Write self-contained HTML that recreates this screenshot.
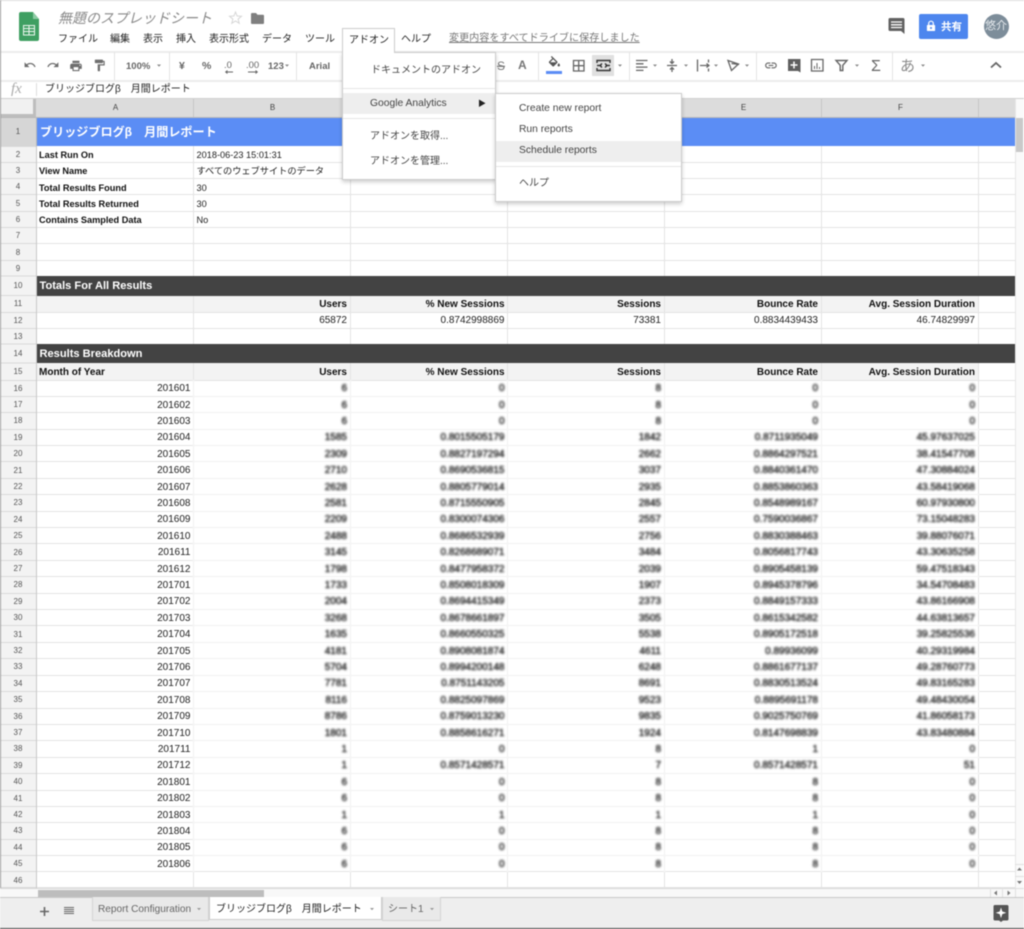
<!DOCTYPE html>
<html lang="ja"><head><meta charset="utf-8"><title>無題のスプレッドシート</title>
<style>
html,body{margin:0;padding:0;background:#fff}
#w{position:relative;width:1024px;height:929px;overflow:hidden;background:#fff;font-family:"Liberation Sans","Noto Sans CJK JP",sans-serif;font-size:10px;color:#222;filter:blur(.4px)}
.abs,.t{position:absolute}
.t{white-space:nowrap;line-height:14px}
svg{position:absolute;left:0;top:0}
.r{position:absolute;left:0;width:1015px;height:16.3px;line-height:16.3px;font-size:10px;color:#222}
.r span{position:absolute;top:1.3px;white-space:nowrap}
.r span:nth-child(1){left:0;width:36px;text-align:center;font-size:8px;color:#555;top:.5px}
.r span:nth-child(2){left:37px;width:153.5px;text-align:right}
.r span:nth-child(3){left:194px;width:153px;text-align:right}
.r span:nth-child(4){left:351px;width:153.5px;text-align:right}
.r span:nth-child(5){left:508px;width:153px;text-align:right}
.r span:nth-child(6){left:665px;width:153px;text-align:right}
.r span:nth-child(7){left:822px;width:153px;text-align:right}
.r span.L{left:39px;width:150px;text-align:left;font-weight:bold;color:#111}
.r span.M{left:196.5px;width:150px;text-align:left}
.s span.L,.s span.M{font-size:9.2px}
.s span.L{top:.8px}.s span.M{top:.8px}
.b span{font-weight:bold;color:#111}
.b span:nth-child(1){font-weight:normal;color:#555}
.v span:nth-child(n+3){filter:blur(1px);color:#111;-webkit-text-stroke:.35px #222}
.d{position:absolute;left:37px;width:978px;background:#434343;color:#fff;font-weight:bold;font-size:11.1px;padding-left:2.5px;box-sizing:border-box}
.ch{position:absolute;top:99px;height:18px;line-height:18px;font-size:8px;color:#444;text-align:center;width:157px}
.n1{position:absolute;left:0;width:36px;text-align:center;font-size:8px;color:#555}
#m1,#m2{position:absolute;background:#fff;border:1px solid #ccc;box-shadow:0 2px 4px rgba(0,0,0,.2);box-sizing:border-box;color:#444}
.hl{position:absolute;background:#eee}
.sep{position:absolute;height:1px;background:#e5e5e5}
.tab{position:absolute;top:897px;height:24px;line-height:25px;box-sizing:border-box;font-size:10.1px;color:#666;background:#e9e9e9;border:1px solid #d4d4d4;border-top:0;white-space:nowrap}
</style></head><body><div id="w">

<!-- top chrome -->
<div class="abs" style="left:0;top:0;width:1024px;height:1px;background:#ddd"></div>
<div class="abs" style="left:0;top:51px;width:1024px;height:1.5px;background:#ececec"></div>
<div class="abs" style="left:0;top:80px;width:1024px;height:1.5px;background:#ececec"></div>
<div class="abs" style="left:0;top:98px;width:1024px;height:1px;background:#d0d0d0"></div>

<div class="t" style="left:58px;top:10px;font-size:14px;line-height:17px;font-style:italic;color:#8a8a8a">無題のスプレッドシート</div>
<div class="t" style="left:58px;top:33px;color:#222">ファイル</div>
<div class="t" style="left:110px;top:33px">編集</div>
<div class="t" style="left:143px;top:33px">表示</div>
<div class="t" style="left:176px;top:33px">挿入</div>
<div class="t" style="left:209px;top:33px">表示形式</div>
<div class="t" style="left:262px;top:33px">データ</div>
<div class="t" style="left:305px;top:33px">ツール</div>
<div class="t" style="left:401px;top:33px">ヘルプ</div>
<div class="t" style="left:449px;top:31.5px;color:#777;text-decoration:underline;font-size:10.1px">変更内容をすべてドライブに保存しました</div>

<!-- share -->
<div class="abs" style="left:919px;top:14px;width:49px;height:25px;background:#4d86ee;border-radius:2px"></div>
<div class="t" style="left:941px;top:20px;color:#fff;font-weight:bold;font-size:10.5px">共有</div>
<div class="abs" style="left:983.5px;top:13.5px;width:25px;height:25px;border-radius:50%;background:#7d8d9a"></div>
<div class="t" style="left:985px;top:19px;color:#e8ecef;font-size:11px">悠介</div>

<!-- formula bar -->
<div class="t" style="left:11px;top:81px;font-family:'Liberation Serif',serif;font-style:italic;font-size:15px;line-height:17px;color:#aaa">fx</div>
<div class="abs" style="left:36px;top:83px;width:1px;height:13px;background:#ddd"></div>
<div class="t" style="left:45px;top:82.5px;color:#222">ブリッジブログβ　月間レポート</div>

<!-- grid backgrounds -->
<div class="abs" style="left:0;top:99px;width:1015px;height:18px;background:#dcdcdc;border-bottom:1px solid #b8b8b8;box-sizing:content-box"></div>
<div class="abs" style="left:0;top:99px;width:33px;height:15px;background:#f1f1f1;border-right:3px solid #bdbdbd;border-bottom:3px solid #bdbdbd"></div>
<div class="abs" style="left:0;top:118px;width:36px;height:770px;background:#f3f3f3;border-right:1px solid #c8c8c8"></div>
<div class="abs" style="left:0;top:118px;width:36px;height:28px;background:#d6d6d6;border-right:1px solid #b8b8b8"></div>
<div class="abs" style="left:37px;top:295.5px;width:941px;height:16.5px;background:#f3f3f3"></div>
<div class="abs" style="left:37px;top:363px;width:941px;height:17px;background:#f3f3f3"></div>

<svg width="1024" height="929" viewBox="0 0 1024 929" fill="none">
<!-- normal grid -->
<path stroke="#e4e4e4" d="M193.5 146V380M350.5 146V380M507.5 146V380M664.5 146V380M821.5 146V380M978.5 146V888M193.5 872V888M350.5 872V888M507.5 872V888M664.5 872V888M821.5 872V888"/>
<path stroke="#e4e4e4" d="M37 162.5H1015M37 178.5H1015M37 194.5H1015M37 211.5H1015M37 227.5H1015M37 243.5H1015M37 260.5H1015M37 312.5H1015M37 328.5H1015M37 380.5H1015M37 871.5H1015M37 887.5H1015
M37 396.5H194M37 412.5H194M37 429.5H194M37 445.5H194M37 461.5H194M37 478.5H194M37 494.5H194M37 511.5H194M37 527.5H194M37 543.5H194M37 560.5H194M37 576.5H194M37 593.5H194M37 609.5H194M37 625.5H194M37 642.5H194M37 658.5H194M37 675.5H194M37 691.5H194M37 708.5H194M37 724.5H194M37 740.5H194M37 757.5H194M37 773.5H194M37 790.5H194M37 806.5H194M37 822.5H194M37 839.5H194M37 855.5H194
M979 396.5H1015M979 412.5H1015M979 429.5H1015M979 445.5H1015M979 461.5H1015M979 478.5H1015M979 494.5H1015M979 511.5H1015M979 527.5H1015M979 543.5H1015M979 560.5H1015M979 576.5H1015M979 593.5H1015M979 609.5H1015M979 625.5H1015M979 642.5H1015M979 658.5H1015M979 675.5H1015M979 691.5H1015M979 708.5H1015M979 724.5H1015M979 740.5H1015M979 757.5H1015M979 773.5H1015M979 790.5H1015M979 806.5H1015M979 822.5H1015M979 839.5H1015M979 855.5H1015"/>
<!-- faint grid in blurred zone -->
<path stroke="#f5f5f5" stroke-width="1.5" d="M193.5 380V872M350.5 380V872M507.5 380V872M664.5 380V872M821.5 380V872
M194 396.5H979M194 412.5H979M194 429.5H979M194 445.5H979M194 461.5H979M194 478.5H979M194 494.5H979M194 511.5H979M194 527.5H979M194 543.5H979M194 560.5H979M194 576.5H979M194 593.5H979M194 609.5H979M194 625.5H979M194 642.5H979M194 658.5H979M194 675.5H979M194 691.5H979M194 708.5H979M194 724.5H979M194 740.5H979M194 757.5H979M194 773.5H979M194 790.5H979M194 806.5H979M194 822.5H979M194 839.5H979M194 855.5H979"/>
<!-- row header grid -->
<path stroke="#d9d9d9" d="M0 162.5H36M0 178.5H36M0 194.5H36M0 211.5H36M0 227.5H36M0 243.5H36M0 260.5H36M0 312.5H36M0 328.5H36M0 380.5H36M0 396.5H36M0 412.5H36M0 429.5H36M0 445.5H36M0 461.5H36M0 478.5H36M0 494.5H36M0 511.5H36M0 527.5H36M0 543.5H36M0 560.5H36M0 576.5H36M0 593.5H36M0 609.5H36M0 625.5H36M0 642.5H36M0 658.5H36M0 675.5H36M0 691.5H36M0 708.5H36M0 724.5H36M0 740.5H36M0 757.5H36M0 773.5H36M0 790.5H36M0 806.5H36M0 822.5H36M0 839.5H36M0 855.5H36M0 871.5H36M0 887.5H36M0 146.5H36M0 276H36M0 295.5H36M0 344H36M0 363H36"/>
<!-- column header separators -->
<path stroke="#c6c6c6" d="M193.5 99V117M350.5 99V117M507.5 99V117M664.5 99V117M821.5 99V117M978.5 99V117"/>
<!-- left window edge -->
<path stroke="#9a9a9a" d="M.5 0V929"/>
</svg>

<div class="ch" style="left:37px">A</div><div class="ch" style="left:194px">B</div><div class="ch" style="left:351px">C</div><div class="ch" style="left:508px">D</div><div class="ch" style="left:665px">E</div><div class="ch" style="left:822px">F</div>

<!-- row 1 -->
<div class="abs" style="left:37px;top:118px;width:978px;height:28px;background:#5b8df5;color:#fff;font-weight:bold;font-size:12.1px;line-height:28px;padding-left:3px;box-sizing:border-box;white-space:nowrap">ブリッジブログβ　月間レポート</div>
<div class="n1" style="top:118px;line-height:28px">1</div>

<div class="r s" style="top:146.5px"><span>2</span><span class="L">Last Run On</span><span class="M">2018-06-23 15:01:31</span></div>
<div class="r s" style="top:162.7px"><span>3</span><span class="L">View Name</span><span class="M">すべてのウェブサイトのデータ</span></div>
<div class="r s" style="top:178.9px"><span>4</span><span class="L">Total Results Found</span><span class="M">30</span></div>
<div class="r s" style="top:195.2px"><span>5</span><span class="L">Total Results Returned</span><span class="M">30</span></div>
<div class="r s" style="top:211.5px"><span>6</span><span class="L">Contains Sampled Data</span><span class="M">No</span></div>
<div class="r" style="top:227.8px"><span>7</span></div>
<div class="r" style="top:244px"><span>8</span></div>
<div class="r" style="top:260.3px"><span>9</span></div>

<div class="d" style="top:276px;height:19.5px;line-height:21px">Totals For All Results</div>
<div class="n1" style="top:276px;line-height:20px">10</div>
<div class="r b" style="top:295.8px"><span>11</span><span></span><span>Users</span><span>% New Sessions</span><span>Sessions</span><span>Bounce Rate</span><span>Avg. Session Duration</span></div>
<div class="r" style="top:312.2px"><span>12</span><span></span><span>65872</span><span>0.8742998869</span><span>73381</span><span>0.8834439433</span><span>46.74829997</span></div>
<div class="r" style="top:328.6px"><span>13</span></div>
<div class="d" style="top:344.3px;height:19px;line-height:21px">Results Breakdown</div>
<div class="n1" style="top:344.3px;line-height:20px">14</div>
<div class="r b" style="top:363.5px"><span>15</span><span class="L">Month of Year</span><span>Users</span><span>% New Sessions</span><span>Sessions</span><span>Bounce Rate</span><span>Avg. Session Duration</span></div>

<div class="r v" style="top:380px"><span>16</span><span>201601</span><span>6</span><span>0</span><span>8</span><span>0</span><span>0</span></div>
<div class="r v" style="top:396.4px"><span>17</span><span>201602</span><span>6</span><span>0</span><span>8</span><span>0</span><span>0</span></div>
<div class="r v" style="top:412.8px"><span>18</span><span>201603</span><span>6</span><span>0</span><span>8</span><span>0</span><span>0</span></div>
<div class="r v" style="top:429.2px"><span>19</span><span>201604</span><span>1585</span><span>0.8015505179</span><span>1842</span><span>0.8711935049</span><span>45.97637025</span></div>
<div class="r v" style="top:445.6px"><span>20</span><span>201605</span><span>2309</span><span>0.8827197294</span><span>2662</span><span>0.8864297521</span><span>38.41547708</span></div>
<div class="r v" style="top:462px"><span>21</span><span>201606</span><span>2710</span><span>0.8690536815</span><span>3037</span><span>0.8840361470</span><span>47.30884024</span></div>
<div class="r v" style="top:478.4px"><span>22</span><span>201607</span><span>2628</span><span>0.8805779014</span><span>2935</span><span>0.8853860363</span><span>43.58419068</span></div>
<div class="r v" style="top:494.8px"><span>23</span><span>201608</span><span>2581</span><span>0.8715550905</span><span>2845</span><span>0.8548989167</span><span>60.97930800</span></div>
<div class="r v" style="top:511.2px"><span>24</span><span>201609</span><span>2209</span><span>0.8300074306</span><span>2557</span><span>0.7590036867</span><span>73.15048283</span></div>
<div class="r v" style="top:527.6px"><span>25</span><span>201610</span><span>2488</span><span>0.8686532939</span><span>2756</span><span>0.8830388463</span><span>39.88076071</span></div>
<div class="r v" style="top:544px"><span>26</span><span>201611</span><span>3145</span><span>0.8268689071</span><span>3484</span><span>0.8056817743</span><span>43.30635258</span></div>
<div class="r v" style="top:560.4px"><span>27</span><span>201612</span><span>1798</span><span>0.8477958372</span><span>2039</span><span>0.8905458139</span><span>59.47518343</span></div>
<div class="r v" style="top:576.8px"><span>28</span><span>201701</span><span>1733</span><span>0.8508018309</span><span>1907</span><span>0.8945378796</span><span>34.54708483</span></div>
<div class="r v" style="top:593.2px"><span>29</span><span>201702</span><span>2004</span><span>0.8694415349</span><span>2373</span><span>0.8849157333</span><span>43.86166908</span></div>
<div class="r v" style="top:609.6px"><span>30</span><span>201703</span><span>3268</span><span>0.8678661897</span><span>3505</span><span>0.8615342582</span><span>44.63813657</span></div>
<div class="r v" style="top:626px"><span>31</span><span>201704</span><span>1635</span><span>0.8660550325</span><span>5538</span><span>0.8905172518</span><span>39.25825536</span></div>
<div class="r v" style="top:642.4px"><span>32</span><span>201705</span><span>4181</span><span>0.8908081874</span><span>4611</span><span>0.89936099</span><span>40.29319984</span></div>
<div class="r v" style="top:658.8px"><span>33</span><span>201706</span><span>5704</span><span>0.8994200148</span><span>6248</span><span>0.8861677137</span><span>49.28760773</span></div>
<div class="r v" style="top:675.2px"><span>34</span><span>201707</span><span>7781</span><span>0.8751143205</span><span>8691</span><span>0.8830513524</span><span>49.83165283</span></div>
<div class="r v" style="top:691.6px"><span>35</span><span>201708</span><span>8116</span><span>0.8825097869</span><span>9523</span><span>0.8895691178</span><span>49.48430054</span></div>
<div class="r v" style="top:708px"><span>36</span><span>201709</span><span>8786</span><span>0.8759013230</span><span>9835</span><span>0.9025750769</span><span>41.86058173</span></div>
<div class="r v" style="top:724.4px"><span>37</span><span>201710</span><span>1801</span><span>0.8858616271</span><span>1924</span><span>0.8147698839</span><span>43.83480884</span></div>
<div class="r v" style="top:740.8px"><span>38</span><span>201711</span><span>1</span><span>0</span><span>8</span><span>1</span><span>0</span></div>
<div class="r v" style="top:757.2px"><span>39</span><span>201712</span><span>1</span><span>0.8571428571</span><span>7</span><span>0.8571428571</span><span>51</span></div>
<div class="r v" style="top:773.6px"><span>40</span><span>201801</span><span>6</span><span>0</span><span>8</span><span>8</span><span>0</span></div>
<div class="r v" style="top:790px"><span>41</span><span>201802</span><span>6</span><span>0</span><span>8</span><span>8</span><span>0</span></div>
<div class="r v" style="top:806.4px"><span>42</span><span>201803</span><span>1</span><span>1</span><span>1</span><span>1</span><span>0</span></div>
<div class="r v" style="top:822.8px"><span>43</span><span>201804</span><span>6</span><span>0</span><span>8</span><span>8</span><span>0</span></div>
<div class="r v" style="top:839.2px"><span>44</span><span>201805</span><span>6</span><span>0</span><span>8</span><span>8</span><span>0</span></div>
<div class="r v" style="top:855.6px"><span>45</span><span>201806</span><span>6</span><span>0</span><span>8</span><span>8</span><span>0</span></div>
<div class="r" style="top:872px"><span>46</span></div>

<!-- scrollbars -->
<div class="abs" style="left:1015px;top:99px;width:9px;height:798px;background:#fafafa;border-left:1px solid #e6e6e6;box-sizing:border-box"></div>
<div class="abs" style="left:1016px;top:118px;width:7px;height:34px;background:#c9c9c9"></div>
<div class="abs" style="left:0;top:888px;width:1024px;height:9px;background:#f8f8f8;border-top:1px solid #d8d8d8;box-sizing:border-box"></div>
<div class="abs" style="left:38px;top:890px;width:226px;height:7px;background:#bdbdbd"></div>

<!-- footer -->
<div class="abs" style="left:0;top:897px;width:1024px;height:32px;background:#eeeeee;border-top:1px solid #c8c8c8;box-sizing:border-box"></div>
<div class="tab" style="left:92px;width:117px;padding-left:5px">Report Configuration</div>
<div class="tab" style="left:209px;width:173px;height:23px;background:#fff;color:#222;padding-left:6px;border-color:#ccc;top:897px;font-size:10px">ブリッジブログβ　月間レポート</div>
<div class="tab" style="left:382px;width:59px;padding-left:5px;font-size:10px">シート1</div>
<div class="abs" style="left:0;top:928px;width:1024px;height:1px;background:#444"></div>

<!-- icon layer -->
<svg width="1024" height="929" viewBox="0 0 1024 929" fill="none">
<!-- sheets logo -->
<path fill="#3f9f62" d="M19 14a2 2 0 0 1 2-2h12l6 7v20a2 2 0 0 1-2 2H21a2 2 0 0 1-2-2z"/>
<path fill="#8ccba3" d="M33 12l6 7h-6z"/>
<path fill="#fff" opacity=".9" fill-rule="evenodd" d="M23 25h12v10.5H23zm1 1v2h4.5v-2zm5.5 0v2H34v-2zM24 29v2h4.5v-2zm5.5 0v2H34v-2zM24 32v2.5h4.5V32zm5.5 0v2.5H34V32z"/>
<!-- star, folder -->
<path stroke="#d6d6d6" d="M235.5 12l1.6 4 4.4.3-3.4 2.8 1.1 4.2-3.7-2.3-3.7 2.3 1.1-4.2-3.4-2.8 4.4-.3z"/>
<path fill="#7f7f7f" d="M251 14a1 1 0 0 1 1-1h4l1.500 1.700h5.500a1 1 0 0 1 1 1V23a1 1 0 0 1-1 1H252a1 1 0 0 1-1-1z"/>
<!-- comment -->
<path fill="#616161" d="M890 18h13a1.500 1.500 0 0 1 1.500 1.500V34l-3.500-3H890a1.500 1.500 0 0 1-1.500-1.500v-10A1.500 1.500 0 0 1 890 18z"/>
<path stroke="#fff" stroke-width="1.3" d="M891 22h11M891 24.800h11M891 27.500h11"/>
<!-- share lock -->
<path fill="#fff" d="M927.5 25h7a.6.6 0 0 1 .6.6v4.800a.6.6 0 0 1-.6.6h-7a.6.6 0 0 1-.6-.6v-4.800a.6.6 0 0 1 .6-.6z"/>
<path stroke="#fff" stroke-width="1.2" d="M928.7 25v-1.500a2.300 2.300 0 0 1 4.600 0V25"/>
<circle cx="931" cy="28" r="1" fill="#4d86ee"/>

<!-- toolbar separators -->
<path stroke="#e3e3e3" d="M114.5 52V80M169.5 52V80M296.5 52V80M538.5 52V80M629.5 52V80M756.5 52V80M892.5 52V80"/>
<!-- undo redo print paint -->
<g fill="#6e6e6e">
<path transform="translate(23.5 58.5) scale(.54)" d="M12.500 8c-2.650 0-5.050.99-6.900 2.600L2 7v9h9l-3.620-3.620c1.390-1.160 3.160-1.880 5.120-1.880 3.540 0 6.550 2.310 7.600 5.500l2.370-.78C21.080 11.030 17.150 8 12.500 8z"/>
<path transform="translate(46.5 58.5) scale(.54)" d="M18.400 10.600C16.550 8.990 14.150 8 11.500 8c-4.650 0-8.580 3.030-9.960 7.220L3.900 16c1.050-3.190 4.050-5.500 7.600-5.500 1.950 0 3.730.72 5.120 1.880L13 16h9V7l-3.600 3.600z"/>
<path transform="translate(69 59) scale(.58)" d="M19 8H5c-1.660 0-3 1.340-3 3v6h4v4h12v-4h4v-6c0-1.660-1.340-3-3-3zm-3 11H8v-5h8v5zm3-7c-.55 0-1-.45-1-1s.45-1 1-1 1 .45 1 1-.45 1-1 1zm-1-9H6v4h12V3z"/>
<path transform="translate(92.5 58.5) scale(.58)" d="M18 4V3c0-.55-.45-1-1-1H5c-.55 0-1 .45-1 1v4c0 .55.45 1 1 1h12c.55 0 1-.45 1-1V6h1v4H9v11c0 .55.45 1 1 1h2c.55 0 1-.45 1-1v-9h8V4h-3z"/>
</g>
<!-- text tools -->
<g font-family="'Liberation Sans','Noto Sans CJK JP',sans-serif" fill="#666" font-weight="bold">
<text x="126" y="69" font-size="9.5">100%</text>
<text x="179" y="69" font-size="10.5">¥</text>
<text x="202" y="69" font-size="10.5">%</text>
<text x="224" y="68" font-size="9.5" font-weight="normal">.0</text>
<text x="246" y="68" font-size="9.5" font-weight="normal">.00</text>
<text x="268" y="69" font-size="9.5">123</text>
<text x="309" y="69" font-size="9.5">Arial</text>
<text x="497" y="70" font-size="12" font-weight="normal" fill="#777" text-decoration="line-through">S</text>
<text x="518" y="69" font-size="12" fill="#777">A</text>
<text x="871" y="71" font-size="16" font-weight="normal" fill="#666">Σ</text>
<text x="900" y="71" font-size="15" font-weight="normal" fill="#8a8a8a">あ</text>
</g>
<path stroke="#666" d="M226 72h7M227.500 70.500l-1.800 1.500 1.800 1.500M248 72h9M255.500 70.500l1.800 1.500-1.800 1.500"/>
<!-- small dropdown arrows -->
<path fill="#8a8a8a" d="M157 64.500h4l-2 2.200zM285 64.500h4l-2 2.200zM618 64.500h4l-2 2.200zM653 64.500h4l-2 2.200zM684 64.500h4l-2 2.200zM714 64.500h4l-2 2.200zM745 64.500h4l-2 2.200zM855 64.500h4l-2 2.200zM921 64.500h4l-2 2.200z"/>
<!-- fill color -->
<path fill="#555" transform="translate(547 56) scale(.62)" d="M16.560 8.940L7.620 0 6.210 1.410l2.380 2.380-5.150 5.150c-.59.59-.59 1.540 0 2.120l5.500 5.500c.29.29.68.44 1.060.44s.77-.15 1.060-.44l5.500-5.500c.59-.58.59-1.530 0-2.120zM5.210 10L10 5.210 14.790 10H5.210zM19 11.500s-2 2.170-2 3.500c0 1.100.9 2 2 2s2-.9 2-2c0-1.330-2-3.500-2-3.500z"/>
<rect x="546" y="71" width="16" height="3" fill="#5b8df5"/>
<!-- borders -->
<path stroke="#666" stroke-width="1.3" d="M573.500 60.500h10.500v10.500h-10.500zM578.700 60.500v10.500M573.500 65.700h10.500"/>
<!-- merge -->
<rect x="592" y="55" width="22" height="21" fill="#e0e0e0"/>
<path stroke="#333" stroke-width="1.4" d="M597 63V60.500h13V63M597 68v2.500h13V68M597 65.500h4.500M605.500 65.500h4.500M602 63.500l-2 2 2 2M605 63.500l2 2-2 2"/>
<!-- align -->
<path stroke="#666" stroke-width="1.3" d="M636 60.500h11.500M636 63.800h7.500M636 67.100h11.500M636 70.400h7.500"/>
<!-- valign -->
<path stroke="#666" stroke-width="1.3" d="M667 65.500h10M672 59v4M672 68v4M670 61.500l2 2 2-2M670 69.500l2-2 2 2"/>
<!-- wrap -->
<path stroke="#666" stroke-width="1.3" d="M697.500 59.500v12M708.500 59.500v3M708.500 68.500v3M700 65.500h9M706.500 63.500l2.500 2-2.500 2"/>
<!-- rotate -->
<path stroke="#666" stroke-width="1.3" d="M728 60.500l10.500 3.500-7 6.500zM731.500 63.500l7.500 1"/>
<!-- link -->
<path fill="#666" transform="translate(764 58.5) scale(.58)" d="M3.900 12c0-1.710 1.390-3.100 3.100-3.100h4V7H7c-2.760 0-5 2.240-5 5s2.240 5 5 5h4v-1.900H7c-1.710 0-3.100-1.390-3.100-3.100zM8 13h8v-2H8v2zm9-6h-4v1.900h4c1.710 0 3.100 1.390 3.100 3.100s-1.390 3.100-3.100 3.100h-4V17h4c2.760 0 5-2.240 5-5s-2.240-5-5-5z"/>
<!-- comment add -->
<path fill="#5f5f5f" d="M788 59h12.500v13.500L798 71h-10z"/>
<path stroke="#fff" stroke-width="1.5" d="M794 61.500v7M790.500 65h7"/>
<!-- chart -->
<path stroke="#666" stroke-width="1.3" d="M811.500 59.500h11.500V71h-11.500z"/>
<path stroke="#666" d="M814.500 69v-3M817 69v-6M819.500 69v-2"/>
<!-- filter -->
<path stroke="#666" stroke-width="1.4" d="M836 60.500h11l-4.200 4.800V70.500h-2.600v-5.200z"/>
<!-- collapse -->
<path stroke="#666" stroke-width="1.8" d="M991 67.500l5-4.500 5 4.500"/>

<!-- scrollbar arrows -->
<path stroke="#e0e0e0" d="M1015 864.500h9M1015 876.500h9M1015 888.500h9M990.500 888v9M1002.500 888v9M1015.500 888v9"/>
<path fill="#777" d="M1017 870.500h5l-2.500-3zM1017 881h5l-2.500 3zM997 890.500l-3 2.500 3 2.500zM1007.500 890.500l3 2.500-3 2.500z"/>
<!-- footer icons -->
<path stroke="#666" stroke-width="1.6" d="M40 911.500h9M44.500 907v9"/>
<path stroke="#666" d="M64 907.500h10M64 909.500h10M64 911.500h10M64 913.500h10"/>
<path fill="#999" d="M197 908h4l-2 2.200zM370 908h4l-2 2.200zM430 908h4l-2 2.200z"/>
<path fill="#555" d="M995 905h12a1.500 1.500 0 0 1 1.500 1.500V919a1.500 1.500 0 0 1-1.500 1.500h-4l-2 1.500-2-1.500h-4a1.500 1.500 0 0 1-1.500-1.500v-12.500A1.500 1.500 0 0 1 995 905z"/>
<path fill="#fff" d="M1001 907.500l1.300 4 4 1.300-4 1.300-1.300 4-1.300-4-4-1.300 4-1.300z"/>
</svg>

<!-- Addon menu -->
<div class="abs" style="left:342px;top:28px;width:53px;height:25px;background:#fff;border:1px solid #ccc;border-bottom:0;box-sizing:border-box;z-index:3;padding:4px 0 0 6px;line-height:15px;color:#222">アドオン</div>
<div id="m1" style="left:342px;top:52px;width:154px;height:128px;z-index:2">
<div class="hl" style="left:0;top:40px;width:152px;height:21px"></div>
<div class="sep" style="left:0;top:35px;width:152px"></div>
<div class="sep" style="left:0;top:65px;width:152px"></div>
<div class="t" style="left:28px;top:10.5px">ドキュメントのアドオン</div>
<div class="t" style="left:27px;top:44px;font-size:10.3px;color:#444">Google Analytics</div>
<div class="t" style="left:135px;top:44px;font-size:8px;color:#222">▶</div>
<div class="t" style="left:27px;top:76.5px">アドオンを取得...</div>
<div class="t" style="left:27px;top:101.5px">アドオンを管理...</div>
</div>
<!-- Submenu -->
<div id="m2" style="left:495px;top:92.5px;width:187px;height:109px;z-index:4">
<div class="hl" style="left:0;top:47px;width:185px;height:21px"></div>
<div class="sep" style="left:0;top:72px;width:185px"></div>
<div class="t" style="left:23px;top:8.5px;font-size:10.3px">Create new report</div>
<div class="t" style="left:23px;top:29.5px;font-size:10.3px">Run reports</div>
<div class="t" style="left:23px;top:50.5px;font-size:10.3px">Schedule reports</div>
<div class="t" style="left:23px;top:83px">ヘルプ</div>
</div>
</div></body></html>
